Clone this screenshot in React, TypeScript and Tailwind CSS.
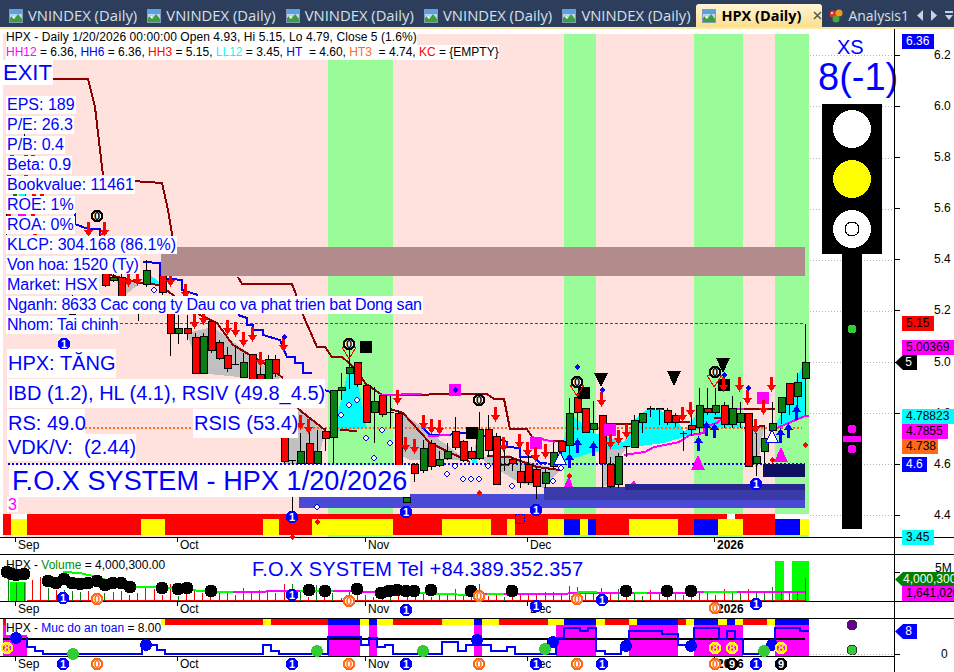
import React from 'react';

// chart data below is written in the coordinates of two 3x crops, mapped back to page px
type Map = (x: number, y: number) => number[];
const L: Map = (x, y) => [Math.round(x / 3), Math.round(240 + y / 3)];
const R: Map = (x, y) => [Math.round(477 + x / 3), Math.round(300 + y / 3)];
const V5: Map = (x, y) => [Math.round(x / 3), Math.round(530 + y / 3)];
const V6: Map = (x, y) => [Math.round(477 + x / 3), Math.round(530 + y / 3)];

const pts = (m: Map, list: number[][]) => list.map(([x, y]) => m(x, y).join(',')).join(' ');

type Candle = [number, number, number, number, number, string];
const RED = '#ff0000';
const GREEN = '#0b7d12';
const BLUE = '#0000ff';
const MAGENTA = '#ff00ff';

const rightCandles: Candle[] = [
  [984, 72, 187, 238, 345, 'g'], [960, 220, 247, 292, 345, 'g'], [936, 248, 248, 316, 345, 'r'], [912, 292, 292, 340, 372, 'g'],
  [885, 305, 370, 392, 415, 'g'], [861, 375, 415, 455, 490, 'g'], [837, 400, 469, 492, 528, 'g'], [813, 340, 340, 500, 500, 'r'],
  [789, 305, 340, 370, 385, 'g'], [765, 288, 325, 376, 385, 'g'], [741, 305, 316, 376, 385, 'r'], [714, 264, 316, 340, 345, 'g'],
  [690, 264, 325, 340, 345, 'r'], [666, 264, 316, 385, 400, 'g'], [642, 345, 376, 391, 408, 'r'], [618, 392, 400, 402, 452, 'k'],
  [594, 340, 346, 370, 380, 'r'], [570, 325, 331, 370, 375, 'r'], [546, 325, 325, 331, 375, 'r'], [519, 318, 325, 331, 352, 'r'],
  [495, 340, 340, 370, 398, 'g'], [471, 345, 361, 445, 445, 'g'], [447, 438, 438, 440, 470, 'k'], [423, 460, 469, 554, 565, 'g'],
  [399, 470, 493, 562, 565, 'r'], [375, 345, 346, 493, 565, 'r'], [347, 303, 370, 391, 400, 'g'], [323, 325, 325, 400, 400, 'r'],
  [299, 280, 292, 340, 390, 'r'], [275, 295, 340, 438, 500, 'g'], [251, 420, 424, 455, 500, 'r'], [227, 430, 455, 500, 510, 'g'],
  [203, 508, 515, 553, 565, 'g'], [177, 500, 508, 562, 596, 'r'], [153, 455, 493, 548, 555, 'r'], [129, 475, 514, 548, 565, 'r'],
  [105, 470, 478, 492, 514, 'r'], [81, 450, 493, 499, 514, 'g'], [57, 400, 409, 554, 555, 'r'], [33, 345, 386, 454, 470, 'r'],
  [7, 335, 386, 478, 480, 'g'],
];

const leftCandles: Candle[] = [
  [1413, 620, 633, 658, 660, 'r'], [1389, 600, 604, 664, 665, 'r'], [1365, 530, 572, 624, 630, 'r'], [1341, 608, 634, 658, 660, 'g'],
  [1317, 632, 658, 678, 680, 'g'], [1293, 600, 610, 680, 690, 'r'], [1269, 600, 625, 694, 700, 'g'], [1241, 670, 673, 703, 725, 'r'],
  [1217, 760, 770, 788, 790, 'g'], [1193, 510, 520, 700, 710, 'r'], [1170, 468, 516, 518, 565, 'k'], [1146, 466, 466, 526, 530, 'r'],
  [1122, 440, 482, 520, 608, 'g'], [1098, 436, 436, 550, 550, 'r'], [1071, 367, 367, 436, 440, 'r'], [1047, 320, 382, 403, 448, 'g'],
  [1022, 400, 442, 452, 480, 'g'], [998, 450, 450, 595, 670, 'g'], [974, 565, 572, 596, 632, 'r'], [950, 570, 634, 672, 672, 'g'],
  [926, 565, 610, 672, 672, 'r'], [900, 580, 634, 672, 672, 'g'], [876, 660, 660, 662, 830, 'k'], [852, 560, 565, 665, 670, 'r'],
  [826, 345, 358, 402, 410, 'r'], [804, 345, 358, 420, 420, 'g'], [780, 345, 402, 420, 420, 'r'], [755, 343, 343, 420, 420, 'r'],
  [729, 340, 367, 415, 415, 'g'], [705, 320, 372, 374, 375, 'k'], [681, 320, 344, 388, 395, 'r'], [657, 300, 305, 358, 360, 'r'],
  [633, 240, 244, 334, 340, 'r'], [609, 280, 288, 403, 403, 'g'], [585, 280, 290, 403, 403, 'r'], [561, 225, 265, 283, 300, 'r'],
  [533, 225, 265, 283, 312, 'g'], [510, 215, 215, 283, 347, 'r'], [485, 80, 106, 160, 165, 'r'], [437, 60, 91, 136, 140, 'g'],
  [363, 100, 112, 170, 175, 'r'], [339, 100, 110, 122, 125, 'g'], [315, 90, 100, 137, 140, 'r'],
  [413, 170, 172, 174, 242, 'k'], [215, 222, 222, 224, 165, 'k'],
];

const CandleMark: React.FC<{ m: Map; c: Candle }> = ({ m, c }) => {
  const [x, wt] = m(c[0], c[1]);
  const [, t] = m(c[0], c[2]);
  const [, b] = m(c[0], c[3]);
  const [, wb] = m(c[0], c[4]);
  const fill = c[5] === 'r' ? RED : c[5] === 'g' ? GREEN : '#000000';
  return (
    <g>
      <rect x={x} y={Math.min(wt, wb)} width={1} height={Math.abs(wb - wt)} fill="#000" />
      {c[5] === 'k' ? (
        <rect x={x - 3} y={t} width={7} height={1} fill="#000" />
      ) : (
        <>
          <rect x={x - 3} y={t} width={8} height={Math.max(b - t, 2)} fill="#000" />
          <rect x={x - 2} y={t + 1} width={6} height={Math.max(b - t - 2, 1)} fill={fill} />
        </>
      )}
    </g>
  );
};

const Down: React.FC<{ p: number[]; color?: string }> = ({ p: [x, y], color = RED }) => (
  <polygon points={`${x - 1},${y - 8} ${x + 2},${y - 8} ${x + 2},${y} ${x + 5},${y} ${x + 0.5},${y + 7} ${x - 4},${y} ${x - 1},${y}`} fill={color} />
);
const Up: React.FC<{ p: number[] }> = ({ p: [x, y] }) => (
  <polygon points={`${x - 1},${y + 8} ${x + 2},${y + 8} ${x + 2},${y} ${x + 5},${y} ${x + 0.5},${y - 7} ${x - 4},${y} ${x - 1},${y}`} fill={BLUE} />
);
const Diamond: React.FC<{ p: number[]; color: string; hollow?: boolean }> = ({ p: [x, y], color, hollow }) => (
  <polygon points={`${x},${y - 3} ${x + 3},${y} ${x},${y + 3} ${x - 3},${y}`} fill={hollow ? '#ffffff' : color} stroke={hollow ? color : 'none'} />
);
const Badge: React.FC<{ p: number[]; kind: 'blue' | 'orange' | 'ring' | 'yellow' | 'nine' }> = ({ p: [x, y], kind }) => {
  const style = {
    blue: { fill: BLUE, stroke: BLUE, text: '#ffffff', label: '1' },
    orange: { fill: '#ffffff', stroke: '#ff6a1a', text: '#ff6a1a', label: '0' },
    ring: { fill: '#ffffff', stroke: '#000000', text: '#000000', label: '0' },
    yellow: { fill: MAGENTA, stroke: '#ffff00', text: '#ffff00', label: '8' },
    nine: { fill: '#000000', stroke: '#000000', text: '#ffffff', label: '9' },
  }[kind];
  return (
    <g>
      <circle cx={x} cy={y} r={5} fill={style.fill} stroke={style.stroke} strokeWidth={2.5} />
      <text x={x} y={y + 4} textAnchor="middle" fontSize={11} fontWeight={700} fill={style.text}>{style.label}</text>
    </g>
  );
};

const rightDown = [[55, 345], [79, 435], [127, 425], [151, 450], [175, 465], [203, 455], [373, 300], [398, 425], [422, 415], [446, 395], [616, 345], [640, 330], [739, 255], [787, 255], [811, 295], [835, 380], [859, 325], [883, 255]];
const leftDown = [[385, 120], [410, 118], [510, 120], [555, 155], [583, 245], [608, 235], [680, 265], [705, 270], [728, 300], [755, 285], [780, 360], [850, 315], [900, 550], [925, 560], [1191, 475], [1216, 615], [1241, 620], [1268, 550], [1292, 560], [1316, 565], [265, -30], [312, -30]];
const rightUp = [[275, 480], [299, 435], [347, 445], [664, 430], [688, 385], [712, 390], [910, 405], [934, 390], [958, 335]];
const leftHollow = [[462, 150], [1047, 495], [1022, 525], [1071, 480], [1098, 593], [1122, 655], [1146, 570], [1170, 608], [1341, 702], [1365, 678], [1389, 716], [1413, 716], [950, 802]];
const rightHollow = [[33, 498], [252, 503], [7, 537], [105, 558], [228, 543]];
const stripBottom5: [number, number, string][] = [[9, 33, RED], [33, 81, '#ffff00'], [81, 423, RED], [423, 495, '#ffff00'], [495, 789, RED], [789, 837, '#ffff00'], [837, 936, RED], [936, 1179, '#ffff00'], [1179, 1326, RED], [1326, 1431, '#ffff00']];
const stripBottom6: [number, number, string][] = [[0, 42, '#ffff00'], [42, 90, RED], [90, 114, '#ffff00'], [114, 213, RED], [213, 261, '#ffff00'], [261, 309, BLUE], [309, 333, '#ffff00'], [333, 357, BLUE], [357, 456, RED], [456, 603, '#ffff00'], [603, 651, RED], [651, 723, BLUE], [723, 798, '#ffff00'], [798, 893, RED], [893, 969, BLUE], [969, 996, '#ffff00']];
const safety5: [number, number, string][] = [[483, 495, '#ffff00'], [495, 789, RED], [789, 813, '#ffff00'], [813, 984, RED], [984, 1080, BLUE], [1080, 1107, '#ffff00'], [1107, 1131, BLUE], [1131, 1179, '#ffff00'], [1179, 1326, RED], [1326, 1422, '#ffff00'], [1422, 1431, BLUE]];
const safety6: [number, number, string][] = [[0, 15, BLUE], [15, 66, '#ffff00'], [66, 213, RED], [213, 261, '#ffff00'], [261, 357, BLUE], [357, 384, '#ffff00'], [384, 456, RED], [456, 480, '#ffff00'], [480, 603, BLUE], [603, 627, RED], [627, 651, '#ffff00'], [651, 723, BLUE], [723, 750, '#ffff00'], [750, 774, BLUE], [774, 798, '#ffff00'], [798, 870, RED], [870, 894, '#ffff00'], [894, 996, BLUE]];

const Segments: React.FC<{ list: [number, number, string][]; left: number; y: number; h: number }> = ({ list, left, y, h }) => (
  <>
    {list.map(([a, b, c]) => (
      <rect key={a} x={left + a / 3} y={y} width={(b - a) / 3} height={h} fill={c} />
    ))}
  </>
);

const MainChart: React.FC = () => (
  <svg width={894} height={508} viewBox="0 29 894 508" shapeRendering="crispEdges" className="block overflow-visible">
    <rect x={3} y={34} width={806} height={503} fill="#ffe1de" />
    <rect x={328} y={34} width={65} height={503} fill="#99fc99" />
    <rect x={564} y={34} width={32} height={503} fill="#99fc99" />
    <rect x={694} y={34} width={49} height={503} fill="#99fc99" />
    <rect x={775} y={34} width={34} height={503} fill="#99fc99" />
    {[55, 106, 158, 209, 260, 311, 362, 413, 464, 515].map((y) => (
      <line key={y} x1={810} x2={894} y1={y + 0.5} y2={y + 0.5} stroke="#b4b4b4" strokeDasharray="1 2" />
    ))}

    {/* clouds */}
    <polygon points={pts(L, [[345, 110], [420, 130], [370, 170]])} fill="#c0c0c0" />
    <polygon points={pts(L, [[560, 280], [640, 260], [850, 415], [800, 420], [600, 400]])} fill="#c0c0c0" />
    <polygon points={pts(L, [[890, 505], [975, 575], [950, 672], [850, 672]])} fill="#c0c0c0" />
    <polygon points={pts(L, [[1185, 520], [1210, 520], [1400, 660], [1230, 660], [1190, 640]])} fill="#c0c0c0" />
    <polygon points={pts(R, [[7, 470], [100, 470], [250, 510], [200, 565], [130, 550], [100, 530], [30, 490]])} fill="#c0c0c0" />
    <polygon points={pts(R, [[375, 450], [450, 440], [430, 470], [400, 550], [375, 565]])} fill="#c0c0c0" />
    <polygon points={pts(R, [[800, 385], [860, 380], [840, 510], [810, 450]])} fill="#c0c0c0" />
    <polygon points={pts(L, [[998, 575], [1047, 380], [1071, 420], [1100, 565], [1040, 570]])} fill="#00ffff" />
    <polygon points={pts(L, [[1415, 670], [1431, 590], [1431, 670]])} fill="#00ffff" />
    <polygon points={pts(L, [[445, 100], [480, 130], [450, 135]])} fill="#00ffff" />
    <polygon points={pts(R, [[30, 470], [105, 465], [60, 480]])} fill="#00ffff" />
    <polygon points={pts(R, [[250, 490], [275, 340], [350, 400], [440, 425], [470, 360], [495, 340], [520, 325], [590, 345], [620, 395], [660, 340], [720, 335], [780, 370], [800, 380], [720, 380], [660, 390], [640, 405], [560, 430], [440, 445], [350, 455]])} fill="#00ffff" />
    <polygon points={pts(R, [[895, 380], [984, 180], [984, 350]])} fill="#00ffff" />

    {/* levels */}
    <line x1={120} x2={805} y1={323.5} y2={323.5} stroke={RED} strokeDasharray="3 2" />
    <line x1={85} x2={193} y1={427.5} y2={427.5} stroke="#ff6a1a" strokeWidth={2} strokeDasharray="2 2" />
    <line x1={297} x2={802} y1={427.5} y2={427.5} stroke="#ff6a1a" strokeWidth={2} strokeDasharray="2 2" />
    <line x1={8} x2={805} y1={463.5} y2={463.5} stroke={BLUE} strokeWidth={2} strokeDasharray="2 2" />

    {/* zones */}
    <rect x={299} y={494} width={506} height={14} fill="#4a4ad6" />
    <rect x={544} y={487} width={261} height={13} fill="#3a3aa8" />
    <rect x={625} y={484} width={180} height={6} fill="#27278f" />
    <rect x={763} y={464} width={42} height={13} fill="#0f0f60" />

    {/* stepped lines */}
    <polyline points="53,79 88,79 95,107 98,133 103,175" fill="none" stroke="#8b0000" strokeWidth={2} />
    <polyline points="133,181 162,183 168,210 173,240" fill="none" stroke="#8b0000" strokeWidth={2} />
    <polyline points={pts(L, [[715, 110], [725, 133], [875, 133], [890, 170], [910, 225], [950, 320], [975, 320], [995, 350], [1025, 350], [1070, 390], [1095, 430], [1145, 465], [1431, 463]])} fill="none" stroke="#8b0000" strokeWidth={2} />
    <polyline points={pts(R, [[0, 282], [30, 282], [50, 296], [80, 296], [100, 388], [150, 388], [165, 412]])} fill="none" stroke="#8b0000" strokeWidth={2} />
    <polyline points={pts(R, [[375, 372], [470, 372]])} fill="none" stroke="#8b0000" strokeWidth={2} />
    <polyline points={pts(R, [[560, 366], [640, 366]])} fill="none" stroke="#8b0000" strokeWidth={2} />
    <polyline points={pts(R, [[710, 353], [740, 353], [740, 326], [895, 326]])} fill="none" stroke="#8b0000" strokeWidth={2} />
    <polyline points={pts(R, [[228, 424], [262, 422]])} fill="none" stroke="#8b0000" strokeWidth={2} />
    <polyline points={pts(L, [[1020, 570], [1070, 572]])} fill="none" stroke="#8b0000" strokeWidth={2} />

    <polyline points={pts(L, [[330, 105], [420, 130], [480, 135], [520, 165], [600, 225], [650, 250], [700, 315], [750, 345], [800, 375], [850, 415]])} fill="none" stroke="#8b0000" strokeWidth={2} />
    <polyline points={pts(L, [[890, 505], [975, 570]])} fill="none" stroke="#8b0000" strokeWidth={2} />
    <polyline points={pts(L, [[1170, 508], [1210, 520], [1290, 610], [1410, 665]])} fill="none" stroke="#8b0000" strokeWidth={2} />
    <polyline points={pts(R, [[30, 467], [100, 470], [180, 500], [250, 510]])} fill="none" stroke="#8b0000" strokeWidth={2} />
    <polyline points={pts(R, [[800, 385], [860, 378]])} fill="none" stroke="#8b0000" strokeWidth={2} />

    <polyline points="75,213 75,224 88,229 100,229 100,236" fill="none" stroke={BLUE} strokeWidth={2} />
    <polyline points={pts(L, [[430, 65], [480, 70], [480, 115], [545, 120], [545, 150], [595, 165]])} fill="none" stroke={BLUE} strokeWidth={2} />
    <polyline points={pts(L, [[715, 225], [740, 235], [740, 255], [760, 255], [760, 270], [790, 270], [790, 285], [840, 300], [860, 350], [885, 350], [885, 370], [910, 370], [910, 400], [935, 400]])} fill="none" stroke={BLUE} strokeWidth={2} />
    <polyline points={pts(L, [[975, 450], [990, 455]])} fill="none" stroke={BLUE} strokeWidth={2} />
    <polyline points={pts(L, [[1270, 565], [1290, 585], [1350, 585], [1365, 580], [1431, 580]])} fill="none" stroke={BLUE} strokeWidth={2} />
    <polyline points={pts(R, [[0, 405], [60, 415], [90, 425], [90, 440], [130, 445], [130, 470], [170, 470], [190, 490], [210, 490]])} fill="none" stroke={BLUE} strokeWidth={2} />

    <polyline points={pts(R, [[440, 465], [505, 455], [530, 440], [580, 432], [605, 425], [640, 405], [680, 400], [680, 380], [720, 370], [770, 328], [800, 326]])} fill="none" stroke={MAGENTA} strokeWidth={2} />
    <polyline points={pts(R, [[165, 412], [235, 425]])} fill="none" stroke={MAGENTA} strokeWidth={2} />
    <polyline points={pts(R, [[880, 392], [984, 347], [996, 347]])} fill="none" stroke={MAGENTA} strokeWidth={2} />
    <polyline points={pts(L, [[1140, 465], [1265, 463]])} fill="none" stroke={MAGENTA} strokeWidth={2} />
    <polyline points={pts(L, [[1285, 588], [1350, 586]])} fill="none" stroke={MAGENTA} strokeWidth={2} />

    {/* scraps of early bars that show between the text boxes */}
    {[[10, 155], [24, 155], [31, 155], [7, 175], [24, 175], [13, 194], [22, 194], [32, 194], [40, 194], [7, 214], [18, 214], [31, 214], [33, 233], [100, 233]].map(([x, y]) => (
      <rect key={`${x}-${y}`} x={x} y={y} width={4} height={2} fill={RED} />
    ))}
    <rect x={13} y={194} width={4} height={2} fill={GREEN} />
    <rect x={19} y={194} width={6} height={2} fill="#00ffff" />
    <rect x={18} y={214} width={8} height={2} fill={MAGENTA} />
    <rect x={6} y={211} width={1} height={24} fill="#000" />
    <rect x={24} y={134} width={1} height={6} fill="#000" />

    {leftCandles.map((c, i) => <CandleMark key={i} m={L} c={c} />)}
    {rightCandles.map((c, i) => <CandleMark key={i} m={R} c={c} />)}

    {/* big squares and triangles */}
    <rect x={360} y={341} width={12} height={12} fill="#000" />
    <rect x={466} y={427} width={12} height={12} fill="#000" />
    <rect x={578} y={387} width={12} height={12} fill="#000" />
    <rect x={718} y={379} width={12} height={12} fill="#000" />
    {[[449, 384], [530, 437], [604, 424], [757, 392]].map(([x, y]) => (
      <rect key={x} x={x} y={y} width={12} height={12} fill={MAGENTA} />
    ))}
    <Diamond p={[455, 390]} color={BLUE} />
    {[[275, 525, 561, 13], [664, 466, 510, 21], [911, 442, 487, 21], [470, 540, 552, 7]].map(([x, a, b, w]) => (
      <polygon key={x} points={pts(R, [[x, a], [x + w, b], [x - w, b]])} fill={MAGENTA} />
    ))}
    {[[250, 455, 493], [885, 390, 425]].map(([x, a, b]) => (
      <polygon key={x} points={pts(R, [[x, a], [x + 18, b], [x - 18, b]])} fill="#ffffff" stroke={BLUE} />
    ))}
    {[[373, 220, 262], [592, 213, 257], [739, 175, 218]].map(([x, a, b]) => (
      <polygon key={x} points={pts(R, [[x - 21, a], [x + 21, a], [x, b]])} fill="#000" />
    ))}
    {[[300, 255, 288], [712, 224, 262]].map(([x, a, b]) => (
      <polygon key={x} points={pts(R, [[x - 22, a], [x + 22, a], [x, b]])} fill="none" stroke={RED} />
    ))}
    <polygon points={pts(L, [[1025, 320], [1067, 320], [1046, 358]])} fill="none" stroke={RED} />

    {rightDown.map((p) => <Down key={p.join()} p={R(p[0], p[1])} />)}
    {leftDown.map((p) => <Down key={p.join()} p={L(p[0], p[1])} />)}
    {rightUp.map((p) => <Up key={p.join()} p={R(p[0], p[1])} />)}
    {leftHollow.map((p) => <Diamond key={p.join()} p={L(p[0], p[1])} color={BLUE} hollow />)}
    {rightHollow.map((p) => <Diamond key={p.join()} p={R(p[0], p[1])} color={BLUE} hollow />)}
    {[[300, 200], [375, 270], [741, 225], [813, 263]].map((p) => <Diamond key={p.join()} p={R(p[0], p[1])} color={BLUE} />)}
    <Diamond p={L(852, 291)} color={BLUE} />
    {[[275, 527], [885, 480], [983, 435], [5, 580]].map((p) => <Diamond key={p.join()} p={R(p[0], p[1])} color={RED} />)}

    {/* bottom colour strips */}
    <rect x={3} y={514} width={806} height={5} fill={RED} />
    <rect x={11} y={514} width={16} height={5} fill="#ffffff" />
    <rect x={727} y={514} width={8} height={5} fill="#ffffff" />
    <rect x={775} y={514} width={34} height={5} fill="#ffffff" />
    <Segments list={stripBottom5} left={0} y={519} h={16} />
    <Segments list={stripBottom6} left={477} y={519} h={16} />

    <Diamond p={L(951, 846)} color={RED} />
    <Diamond p={L(875, 890)} color={RED} />
    <Badge p={L(192, 311)} kind="blue" />
    <Badge p={L(875, 830)} kind="blue" />
    <Badge p={L(1218, 815)} kind="blue" />
    <Badge p={R(177, 630)} kind="blue" />
    <Badge p={R(837, 552)} kind="blue" />
    <Badge p={[97, 216]} kind="ring" />
    <Badge p={L(1047, 312)} kind="ring" />
    <Badge p={R(7, 300)} kind="ring" />
    <Badge p={R(300, 245)} kind="ring" />
    <Badge p={R(714, 216)} kind="ring" />
    <rect x={515} y={514} width={9} height={9} fill="none" stroke={BLUE} strokeDasharray="2 1" />

    {/* price zone */}
    <rect x={161} y={247} width={644} height={29} fill="#b28c8c" />

    {/* traffic light */}
    <rect x={822} y={104} width={60} height={150} fill="#000" />
    <rect x={842} y={254} width={20} height={275} fill="#000" />
    <circle cx={852} cy={129} r={19} fill="#fff" />
    <circle cx={852} cy={179} r={19} fill="#ffff00" />
    <circle cx={852} cy={229} r={19} fill="#fff" />
    <circle cx={852} cy={229} r={7} fill="#fff" stroke="#000" />
    <circle cx={852} cy={329} r={4.5} fill="#33cc33" />
    <circle cx={852} cy={429} r={4.5} fill={MAGENTA} />
    <rect x={843} y={436} width={18} height={6} fill={MAGENTA} />
    <circle cx={852} cy={449} r={4.5} fill={MAGENTA} />
  </svg>
);

const volumeBars5 = [[24, 148, 'g'], [48, 160, 'g'], [72, 160, 'g'], [96, 150, 'r'], [120, 140, 'r'], [144, 175, 'g'], [168, 180, 'r'], [192, 180, 'g'], [216, 182, 'g'], [240, 185, 'g'], [264, 182, 'r'], [288, 190, 'r'], [312, 188, 'g'], [338, 186, 'g'], [362, 182, 'r'], [388, 195, 'r'], [412, 190, 'g'], [436, 170, 'g'], [462, 178, 'r'], [486, 195, 'r'], [510, 162, 'r'], [534, 198, 'g'], [558, 185, 'r'], [582, 182, 'r'], [606, 190, 'r'], [630, 195, 'r'], [656, 190, 'r'], [680, 185, 'r'], [704, 195, 'g'], [730, 175, 'g'], [752, 185, 'g'], [778, 180, 'g'], [802, 185, 'g'], [826, 190, 'r'], [852, 162, 'r'], [876, 162, 'g'], [900, 185, 'g'], [924, 200, 'r'], [948, 165, 'g'], [972, 190, 'r'], [996, 190, 'g'], [1022, 205, 'g'], [1047, 180, 'g'], [1071, 195, 'r'], [1095, 195, 'g'], [1119, 200, 'r'], [1145, 185, 'r'], [1170, 195, 'g'], [1195, 195, 'r'], [1220, 200, 'r'], [1245, 190, 'g'], [1269, 190, 'g'], [1293, 200, 'r'], [1317, 193, 'g'], [1341, 193, 'g'], [1365, 178, 'g'], [1389, 198, 'r'], [1413, 180, 'g']] as [number, number, string][];
const volumeBars6 = [[7, 162, 'g'], [33, 198, 'r'], [57, 192, 'r'], [81, 202, 'g'], [105, 192, 'r'], [129, 192, 'r'], [153, 192, 'r'], [177, 195, 'r'], [203, 186, 'g'], [227, 186, 'g'], [251, 190, 'r'], [275, 168, 'g'], [299, 172, 'r'], [323, 190, 'g'], [347, 190, 'g'], [371, 175, 'r'], [399, 188, 'r'], [423, 178, 'g'], [447, 190, 'r'], [471, 190, 'g'], [495, 198, 'g'], [519, 180, 'r'], [546, 186, 'r'], [570, 190, 'r'], [594, 188, 'r'], [618, 196, 'r'], [642, 198, 'r'], [666, 186, 'g'], [690, 186, 'g'], [714, 196, 'r'], [741, 178, 'r'], [765, 190, 'g'], [789, 186, 'g'], [813, 178, 'r'], [837, 186, 'g'], [861, 188, 'g'], [885, 172, 'g'], [912, 190, 'g'], [936, 184, 'r'], [960, 190, 'g'], [984, 145, 'g']] as [number, number, string][];
const volumeDots5 = [[20, 127], [36, 132], [48, 135], [72, 132], [144, 152], [168, 160], [192, 148], [216, 158], [240, 162], [264, 158], [290, 152], [315, 165], [338, 160], [364, 158], [390, 172], [486, 175], [534, 178], [562, 175], [632, 182], [928, 181], [975, 182], [1071, 178], [1143, 188], [1167, 184], [1192, 181], [1217, 184], [1243, 184], [1293, 181], [1413, 184]];
const volumeDots6 = [[105, 184], [447, 184], [570, 184], [642, 184]];

const VolumeChart: React.FC = () => (
  <svg width={894} height={46} viewBox="0 555 894 46" shapeRendering="crispEdges" className="block overflow-visible">
    <rect x={10} y={582} width={16} height={19} fill="#00ff00" />
    <rect x={775} y={561} width={9} height={40} fill="#00ff00" />
    <rect x={792} y={561} width={17} height={40} fill="#00ff00" />
    <line x1={27} x2={805} y1={600.5} y2={600.5} stroke={RED} />
    {volumeBars5.map(([x, y, c]) => {
      const [px, py] = V5(x, y);
      return <rect key={x} x={px} y={py} width={1} height={601 - py} fill={c === 'r' ? RED : GREEN} />;
    })}
    {volumeBars6.map(([x, y, c]) => {
      const [px, py] = V6(x, y);
      return <rect key={x} x={px} y={py} width={1} height={601 - py} fill={c === 'r' ? RED : GREEN} />;
    })}
    <polyline points={pts(V5, [[190, 125], [240, 128], [290, 140], [330, 153], [400, 170], [470, 172], [510, 175], [560, 172], [590, 182], [700, 185]])} fill="none" stroke="#00ff00" strokeWidth={2} />
    <polyline points={pts(V5, [[700, 186], [900, 184]])} fill="none" stroke={MAGENTA} strokeWidth={2} />
    <polyline points={pts(V5, [[900, 182], [1000, 184]])} fill="none" stroke="#00ff00" strokeWidth={2} />
    <polyline points={pts(V5, [[1000, 184], [1130, 186]])} fill="none" stroke={MAGENTA} strokeWidth={2} />
    <polyline points={pts(V5, [[1260, 188], [1310, 192], [1431, 195]])} fill="none" stroke="#00ff00" strokeWidth={2} />
    <polyline points={pts(V6, [[0, 193], [250, 192], [300, 188], [984, 187]])} fill="none" stroke={MAGENTA} strokeWidth={2} />
    <polyline points={pts(V6, [[30, 193], [80, 193]])} fill="none" stroke="#00ff00" strokeWidth={2} />
    <polyline points={pts(V6, [[300, 187], [360, 187]])} fill="none" stroke="#00ff00" strokeWidth={2} />
    <polyline points={pts(V6, [[470, 190], [510, 190]])} fill="none" stroke="#00ff00" strokeWidth={2} />
    <polyline points={pts(V6, [[680, 187], [780, 187]])} fill="none" stroke="#00ff00" strokeWidth={2} />
    {volumeDots5.map((p) => {
      const [x, y] = V5(p[0], p[1]);
      return <circle key={p[0]} cx={x} cy={y} r={6.5} fill="#000" />;
    })}
    {volumeDots6.map((p) => {
      const [x, y] = V6(p[0], p[1]);
      return <circle key={p[0]} cx={x} cy={y} r={6.5} fill="#000" />;
    })}
    <Badge p={V5(190, 204)} kind="blue" />
    <Badge p={V5(875, 196)} kind="blue" />
    <Badge p={V5(290, 208)} kind="orange" />
    <Badge p={V5(1046, 214)} kind="orange" />
    <Badge p={V6(7, 197)} kind="orange" />
    <Badge p={V6(300, 208)} kind="orange" />
    <Badge p={V6(375, 210)} kind="blue" />
    <Badge p={V6(837, 222)} kind="blue" />
    <Badge p={V6(177, 228)} kind="blue" />
    <Badge p={V6(714, 234)} kind="orange" />
  </svg>
);

const SafetyChart: React.FC = () => (
  <svg width={894} height={37} viewBox="0 619 894 37" shapeRendering="crispEdges" className="block overflow-visible">
    {[[3, 24, 635], [328, 32, 625], [369, 8, 625]].map(([x, w, y]) => (
      <rect key={x} x={x} y={y} width={w} height={656 - y} fill={MAGENTA} />
    ))}
    <rect x={3} y={625} width={3} height={10} fill={MAGENTA} />
    {[[474, 8], [556, 40], [629, 49], [694, 49], [775, 34]].map(([x, w]) => (
      <rect key={x} x={x} y={625} width={w} height={31} fill={MAGENTA} />
    ))}
    <rect x={3} y={619} width={3} height={6} fill={RED} />
    <Segments list={safety5} left={0} y={619} h={6} />
    <Segments list={safety6} left={477} y={619} h={6} />
    <line x1={3} x2={805} y1={639} y2={639} stroke="#000" strokeWidth={2} />
    <polyline points={pts(V5, [[80, 320], [80, 352], [105, 352], [105, 362], [130, 362], [130, 372], [425, 372], [425, 345], [470, 345], [470, 360], [495, 360], [495, 372], [788, 372], [788, 345], [813, 345], [813, 362], [837, 362], [837, 372], [985, 372], [985, 322], [1083, 320], [1083, 345], [1107, 345], [1107, 325], [1131, 325], [1131, 352], [1155, 352], [1155, 345], [1179, 345], [1179, 372], [1326, 372], [1326, 336], [1374, 336], [1374, 362], [1398, 362], [1398, 345], [1431, 345]])} fill="none" stroke={BLUE} strokeWidth={2} />
    <polyline points={pts(V6, [[0, 345], [42, 345], [42, 362], [90, 362], [90, 352], [114, 352], [114, 372], [237, 372], [237, 325], [261, 325], [261, 295], [309, 295], [309, 302], [333, 302], [333, 295], [357, 295], [357, 362], [384, 362], [384, 372], [432, 372], [432, 345], [456, 345], [456, 302], [555, 302], [555, 312], [603, 312], [603, 345], [651, 345], [651, 295], [726, 295], [726, 326], [750, 326], [750, 302], [774, 302], [774, 326], [798, 326], [798, 372], [846, 372], [894, 345], [894, 295], [969, 295], [969, 302], [996, 302]])} fill="none" stroke={BLUE} strokeWidth={2} />
    {[[48, 325], [438, 345], [1431, 330]].map((p) => {
      const [x, y] = V5(p[0], p[1]);
      return <circle key={p[0]} cx={x} cy={y} r={6} fill={BLUE} />;
    })}
    {[[228, 337], [447, 347], [642, 347], [885, 346]].map((p) => {
      const [x, y] = V6(p[0], p[1]);
      return <circle key={p[0]} cx={x} cy={y} r={6} fill={BLUE} />;
    })}
    {[[218, 372], [950, 363], [1269, 363]].map((p) => {
      const [x, y] = V5(p[0], p[1]);
      return <circle key={p[0]} cx={x} cy={y} r={6} fill="#33cc33" />;
    })}
    {[[204, 356], [861, 363]].map((p) => {
      const [x, y] = V6(p[0], p[1]);
      return <circle key={p[0]} cx={x} cy={y} r={6} fill="#33cc33" />;
    })}
    <Badge p={V5(22, 353)} kind="yellow" />
    {[[714, 354], [765, 354], [912, 354]].map((p) => <Badge key={p[0]} p={V6(p[0], p[1])} kind="yellow" />)}
    <circle cx={852} cy={625} r={5} fill="#660099" stroke="#333" />
    <circle cx={852} cy={650} r={5} fill="#33cc33" stroke="#333" />
    <line x1={810} x2={894} y1={654.5} y2={654.5} stroke="#b4b4b4" strokeDasharray="1 2" />
  </svg>
);

const ChartIcon: React.FC = () => (
  <svg width={14} height={14} viewBox="0 0 14 14" className="shrink-0">
    <rect x={0.5} y={0.5} width={13} height={13} fill="#bcd7f2" stroke="#7f9bb8" />
    <rect x={1} y={1} width={12} height={4} fill="#5d9fe0" />
    <polygon points="1,13 1,9 4,6 6,9 9,5 13,10 13,13" fill="#3f9e3a" />
    <polygon points="3,8 4,6 6,9 5,10" fill="#ffffff" />
  </svg>
);

const GemsIcon: React.FC = () => (
  <svg width={14} height={14} viewBox="0 0 14 14" className="shrink-0">
    <circle cx={4} cy={5} r={3.5} fill="#e0322a" />
    <circle cx={10} cy={4} r={3.5} fill="#f59a1c" />
    <circle cx={7} cy={10} r={3.5} fill="#49a83a" />
    <circle cx={3} cy={4} r={1} fill="#ffffff" />
  </svg>
);

const Tab: React.FC<{ label: string }> = ({ label }) => (
  <div className="flex items-center gap-[5px] h-[23px] w-[139px] text-[14.8px] text-[#d6e0ea]">
    <ChartIcon />
    <span>{label}</span>
  </div>
);

const TabBar: React.FC = () => (
  <div className="flex items-end h-[27px] shrink-0 pl-[9px] bg-[#2d3d5c] font-['Open_Sans',sans-serif] whitespace-nowrap">
    <Tab label="VNINDEX (Daily)" />
    <Tab label="VNINDEX (Daily)" />
    <Tab label="VNINDEX (Daily)" />
    <Tab label="VNINDEX (Daily)" />
    <div className="w-[134px]"><Tab label="VNINDEX (Daily)" /></div>
    <div className="flex items-center h-[23px] w-[126px] pl-[6px] gap-[5px] rounded-t-[3px] bg-gradient-to-b from-[#fff4d6] to-[#fbdf8e] text-[14.5px] font-bold text-black">
      <ChartIcon />
      <span>HPX (Daily)</span>
      <svg width={9} height={9} viewBox="0 0 9 9" className="ml-[7px]"><path d="M1 1 8 8M8 1 1 8" stroke="#5a5a4a" strokeWidth={1.6} /></svg>
    </div>
    <div className="flex items-center h-[23px] pl-[7px] gap-[5px] w-[94px] text-[14px] text-[#d6e0ea]">
      <GemsIcon />
      <span>Analysis1</span>
    </div>
    <div className="flex items-center h-[23px] gap-[6px]">
      <svg width={8} height={11} viewBox="0 0 8 11"><polygon points="7,0 7,11 1,5.5" fill="#c8d2de" /></svg>
      <svg width={8} height={11} viewBox="0 0 8 11"><polygon points="1,0 1,11 7,5.5" fill="#c8d2de" /></svg>
      <svg width={10} height={11} viewBox="0 0 10 11"><rect x={1} y={1} width={8} height={2} fill="#c8d2de" /><polygon points="1,5 9,5 5,10" fill="#c8d2de" /></svg>
    </div>
  </div>
);

const TimeAxis: React.FC<{ children?: React.ReactNode; viewY: number; last?: boolean }> = ({ children, viewY, last }) => (
  <div className={`relative flex shrink-0 ${last ? 'h-[15px]' : 'h-[17px] border-b border-black'}`}>
    <div className="flex w-[894px] pl-[15px] text-[12px] leading-[15px] text-black">
      <div className="w-[162px] border-l border-black h-[4px] pl-[2px] whitespace-nowrap">Sep</div>
      <div className="w-[188px] border-l border-black h-[4px] pl-[2px] whitespace-nowrap">Oct</div>
      <div className="w-[162px] border-l border-black h-[4px] pl-[2px] whitespace-nowrap">Nov</div>
      <div className="w-[187px] border-l border-black h-[4px] pl-[2px] whitespace-nowrap">Dec</div>
      <div className="border-l border-black h-[4px] pl-[2px] font-bold whitespace-nowrap">2026</div>
    </div>
    <div className="w-[60px] border-l border-black" />
    <svg width={894} height={16} viewBox={`0 ${viewY} 894 16`} shapeRendering="crispEdges" className="absolute left-0 top-0 overflow-visible">
      {children}
    </svg>
  </div>
);

const Item: React.FC<{ children: React.ReactNode; className?: string }> = ({ children, className = '' }) => (
  <div className={`self-start h-[18px] leading-[18px] bg-white px-[1px] whitespace-nowrap ${className}`}>{children}</div>
);

const InfoOverlay: React.FC = () => (
  <>
    <div className="absolute left-[6px] top-[1px] flex flex-col text-[12px] leading-[15px] text-black">
      <div className="self-start bg-white whitespace-nowrap tracking-[0.07px]">HPX - Daily 1/20/2026 00:00:00 Open 4.93, Hi 5.15, Lo 4.79, Close 5 (1.6%)</div>
      <div className="self-start bg-white whitespace-nowrap">
        <span className="text-[#ff00ff]">HH12</span> = 6.36, <span className="text-[#0000ff]">HH6</span> = 6.36, <span className="text-[#ff0000]">HH3</span> = 5.15, <span className="text-[#00ffff]">LL12</span> = 3.45, <span className="text-[#0000ff]">HT</span>&nbsp; = 4.60, <span className="text-[#ff6a1a]">HT3</span>&nbsp; = 4.74, <span className="text-[#ff0000]">KC</span> = {'{EMPTY}'}
      </div>
    </div>
    <div className="absolute left-[3px] top-[31px] h-[25px] leading-[25px] bg-white pr-[1px] text-[22px] text-[#0000ff]">EXIT</div>
    <div className="absolute left-[6px] top-[67px] flex flex-col gap-[2px] text-[16px] text-[#0000ff]">
      <Item>EPS: 189</Item>
      <Item>P/E: 26.3</Item>
      <Item>P/B: 0.4</Item>
      <Item>Beta: 0.9</Item>
      <Item>Bookvalue: 11461</Item>
      <Item>ROE: 1%</Item>
      <Item>ROA: 0%</Item>
      <Item>KLCP: 304.168 (86.1%)</Item>
      <Item className="tracking-[-0.2px]">Von hoa: 1520 (Ty)</Item>
      <Item>Market: HSX</Item>
      <Item className="tracking-[-0.23px]">Nganh: 8633 Cac cong ty Dau co va phat trien bat Dong san</Item>
      <Item className="tracking-[-0.2px]">Nhom: Tai chinh</Item>
    </div>
    <div className="absolute left-[7px] top-[320px] flex flex-col text-[20px] text-[#0000ff] whitespace-nowrap">
      <div className="self-start h-[29px] leading-[29px] bg-white pl-[1px] pr-[1px]">HPX: TĂNG</div>
      <div className="self-start h-[29px] mt-[1px] leading-[29px] bg-white pl-[1px]">IBD (1.2), HL (4.1), RSIV (49.8_4.5)</div>
      <div className="flex h-[29px] mt-[1px] leading-[29px]">
        <div className="w-[78px] bg-white pl-[1px]">RS: 49.0</div>
        <div className="ml-[108px] bg-white pl-[1px]">RSIS (53.4)</div>
      </div>
      <div className="self-start h-[27px] -mt-[4px] leading-[27px] bg-white pl-[1px]">VDK/V:&nbsp; (2.44)</div>
      <div className="self-start h-[32px] mt-[4px] ml-[2px] leading-[32px] bg-white px-[3px] text-[27px] tracking-[0.08px]">F.O.X SYSTEM - HPX 1/20/2026</div>
      <div className="self-start h-[15px] leading-[15px] bg-white px-[1px] text-[16px] text-[#ff00ff]">3</div>
    </div>
    <div className="absolute left-[837px] top-[6px] text-[20px] leading-[24px] text-[#0000ff]">XS</div>
    <div className="absolute left-[817px] top-[29px] h-[39px] leading-[39px] bg-white px-[1px] text-[38px] text-[#0000ff]">8(-1)</div>
  </>
);

// tags sitting on the price axis; left is measured from the axis line
const tagBase = 'absolute h-[15px] leading-[15px] text-[12px] text-black pl-[4px]';

const PriceAxis: React.FC = () => (
  <div className="relative w-[60px] border-l border-black">
    <div className="flex flex-col pt-[26px]">
      {['6.2', '6.0', '5.8', '5.6', '5.4', '5.2', '5.0', '4.8', '4.6', '4.4'].map((p) => (
        <div key={p} className="flex h-[51.1px] items-start">
          <div className="w-[5px] h-px bg-black" />
          <div className="ml-[34px] -mt-[7px] text-[12px] leading-[14px] text-black">{p}</div>
        </div>
      ))}
    </div>
    <div className={`${tagBase} left-[7px] top-[5px] w-[32px] bg-[#0000ff] text-white`}>6.36</div>
    <div className={`${tagBase} left-[7px] top-[287px] w-[32px] bg-[#ff0000]`}>5.15</div>
    <div className={`${tagBase} left-[7px] top-[311px] w-[52px] bg-[#ff00ff]`}>5.00369</div>
    <div className={`${tagBase} left-0 top-[326px] w-[22px] bg-black text-white text-right pr-[5px] [clip-path:polygon(8px_0,100%_0,100%_100%,8px_100%,0_50%)]`}>5</div>
    <div className={`${tagBase} left-[7px] top-[380px] w-[52px] bg-[#00ffff]`}>4.78823</div>
    <div className={`${tagBase} left-[7px] top-[395px] w-[46px] bg-[#ff00ff]`}>4.7855</div>
    <div className={`${tagBase} left-[7px] top-[410px] w-[36px] bg-[#ff6a1a]`}>4.738</div>
    <div className={`${tagBase} left-[7px] top-[428px] w-[25px] bg-[#0000ff] text-white`}>4.6</div>
    <div className={`${tagBase} left-[7px] top-[501px] w-[32px] bg-[#00ffff]`}>3.45</div>
  </div>
);

const App: React.FC = () => (
  <div className="w-[954px] h-[672px] overflow-hidden bg-white flex flex-col [font-family:'Liberation_Sans',sans-serif]">
    <TabBar />
    <div className="h-[2px] shrink-0 bg-[#fce9a9]" />

    {/* price pane */}
    <div className="relative z-10 flex h-[509px] shrink-0 border-b border-black">
      <div className="relative w-[894px]">
        <MainChart />
        <InfoOverlay />
      </div>
      <PriceAxis />
    </div>

    <TimeAxis viewY={538} />

    {/* volume pane */}
    <div className="relative z-10 flex h-[47px] shrink-0 border-b border-black">
      <div className="relative w-[894px]">
        <VolumeChart />
        <div className="absolute left-[6px] top-[3px] text-[12px] leading-[15px] text-black whitespace-nowrap">
          HPX - <span className="text-[#008f00]">Volume</span> = 4,000,300.00
        </div>
        <div className="absolute left-[252px] top-[2px] text-[20px] leading-[24px] tracking-[0.2px] text-[#0000ff] whitespace-nowrap">F.O.X SYSTEM Tel +84.389.352.357</div>
      </div>
      <div className="relative w-[60px] border-l border-black">
        <div className="absolute top-[17px] left-0 w-[5px] h-px bg-black" />
        <div className="absolute top-[6px] left-[40px] text-[12px] leading-[14px] text-black">5M</div>
        <div className={`${tagBase} left-0 top-[17px] w-[59px] bg-[#008000] text-white pl-[8px] [clip-path:polygon(8px_0,100%_0,100%_100%,8px_100%,0_50%)]`}>4,000,300</div>
        <div className={`${tagBase} left-[7px] top-[31px] w-[52px] bg-[#ff00ff] pl-[1px]`}>1,641,020</div>
      </div>
    </div>

    <TimeAxis viewY={602}>
      <Badge p={V5(1218, 240)} kind="blue" />
    </TimeAxis>

    {/* safety pane */}
    <div className="relative z-10 flex h-[38px] shrink-0">
      <div className="relative w-[894px] border-b border-black">
        <SafetyChart />
        <div className="absolute left-[6px] top-[2px] text-[12px] leading-[15px] text-black whitespace-nowrap">
          HPX - <span className="text-[#0000ff]">Muc do an toan</span> = 8.00
        </div>
      </div>
      <div className="relative w-[60px] border-l border-black">
        <div className={`${tagBase} left-0 top-[5px] w-[22px] bg-[#0000ff] text-white text-right pr-[5px] [clip-path:polygon(8px_0,100%_0,100%_100%,8px_100%,0_50%)]`}>8</div>
        <div className="absolute top-[35px] left-0 w-[5px] h-px bg-black" />
        <div className="absolute top-[28px] left-[46px] text-[12px] leading-[14px] text-black">0</div>
      </div>
    </div>

    <TimeAxis viewY={657} last>
      <Badge p={V5(190, 403)} kind="blue" />
      <Badge p={V5(875, 403)} kind="blue" />
      <Badge p={V5(1218, 403)} kind="blue" />
      <Badge p={V5(290, 403)} kind="orange" />
      <Badge p={V5(1046, 403)} kind="orange" />
      <Badge p={V6(7, 403)} kind="orange" />
      <Badge p={V6(177, 403)} kind="blue" />
      <Badge p={V6(300, 403)} kind="orange" />
      <Badge p={V6(375, 403)} kind="blue" />
      <Badge p={V6(714, 403)} kind="orange" />
      <Badge p={V6(765, 403)} kind="nine" />
      <Badge p={V6(837, 403)} kind="blue" />
      <Badge p={V6(912, 403)} kind="nine" />
    </TimeAxis>
  </div>
);

export default App;
